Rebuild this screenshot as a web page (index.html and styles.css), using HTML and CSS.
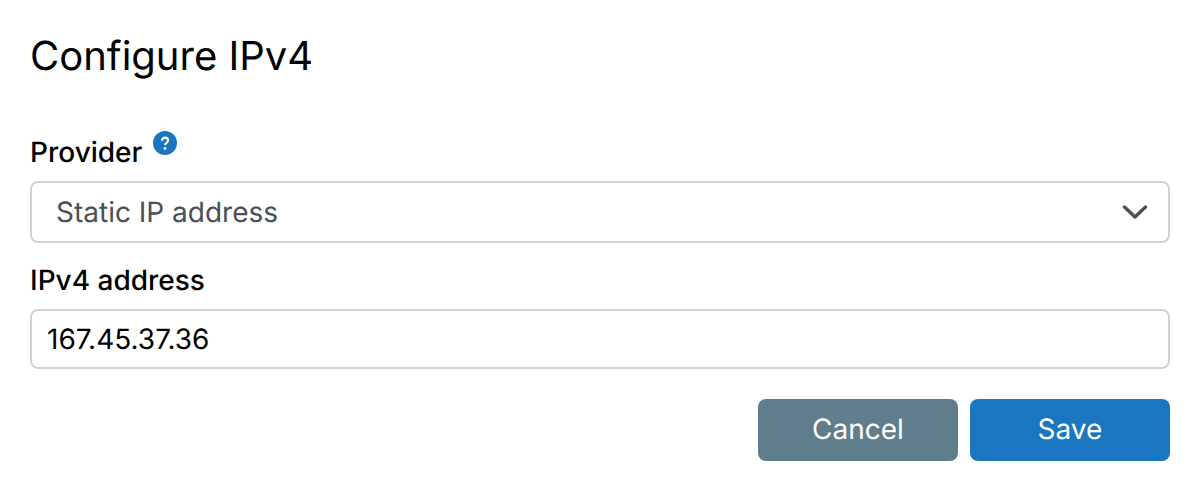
FILE: index.html
```html
<!DOCTYPE html>
<html lang="en">
<head>
<meta charset="utf-8">
<title>Configure IPv4</title>
<link rel="stylesheet" href="styles.css">
</head>
<body>
<form class="dialog">
  <h1 class="title">Configure IPv4</h1>
  <div class="field field-provider">
    <div class="label-row">
      <label class="label">Provider</label>
      <svg class="help" viewBox="0 0 24 24" aria-hidden="true">
        <circle cx="12" cy="12" r="12" fill="#1a76c0"/>
        <path d="M9 9.8c0-1.9 1.3-3.2 3.1-3.2 1.8 0 3 1.1 3 2.7 0 1.3-.7 1.9-1.6 2.6-.9.6-1.4 1.1-1.4 2.2" fill="none" stroke="#fff" stroke-width="2.2"/>
        <circle cx="12" cy="17.5" r="1.4" fill="#fff"/>
      </svg>
    </div>
    <div class="select">
      <span class="select-value">Static IP address</span>
      <svg class="chevron" viewBox="0 0 26 16" aria-hidden="true">
        <path d="M2.5 3 13 13 23.5 3" fill="none" stroke="#495057" stroke-width="3.4" stroke-linecap="round" stroke-linejoin="round"/>
      </svg>
    </div>
  </div>
  <div class="field">
    <label class="label">IPv4 address</label>
    <div class="input">167.45.37.36</div>
  </div>
  <div class="actions">
    <button type="button" class="btn btn-cancel">Cancel</button>
    <button type="button" class="btn btn-save">Save</button>
  </div>
</form>
</body>
</html>
```
FILE: styles.css
```css
* { box-sizing: border-box; }
html, body { margin: 0; background: #fff; }
body { width: 1200px; height: 490px; overflow: hidden; font-family: Inter, "Noto Sans", sans-serif; color: #000; text-rendering: geometricPrecision; }
.dialog { display: flex; flex-direction: column; padding: 30px 30px 0; }
.title { margin: 0 0 52px; font-size: 40px; line-height: 52px; font-weight: 400; }
.label-row { display: flex; align-items: flex-start; gap: 11px; }
.help { width: 24px; height: 24px; flex: none; margin-top: -3px; }
.label { display: block; font-size: 28px; line-height: 36px; font-weight: 500; height: 36px; }
.field { display: flex; flex-direction: column; }
.field-provider { margin-bottom: 19px; }
.select, .input { display: flex; align-items: center; width: 1140px; border: 2px solid #ced4da; border-radius: 8px; background: #fff; font-size: 28px; }
.select { height: 62px; margin-top: 11px; padding: 0 20px 0 24px; justify-content: space-between; color: #495057; }
.input { height: 60px; margin-top: 11px; padding: 0 15px; color: #000; }
.chevron { width: 26px; height: 16px; flex: none; }
.actions { display: flex; justify-content: flex-end; gap: 12px; margin-top: 30px; }
.btn { width: 200px; height: 62px; border: 0; border-radius: 8px; color: #fff; font: 400 28px Inter, "Noto Sans", sans-serif; padding: 0 0 2px; text-rendering: geometricPrecision; }
.btn-cancel { background: #607d8b; }
.btn-save { background: #1a76c0; }
```
